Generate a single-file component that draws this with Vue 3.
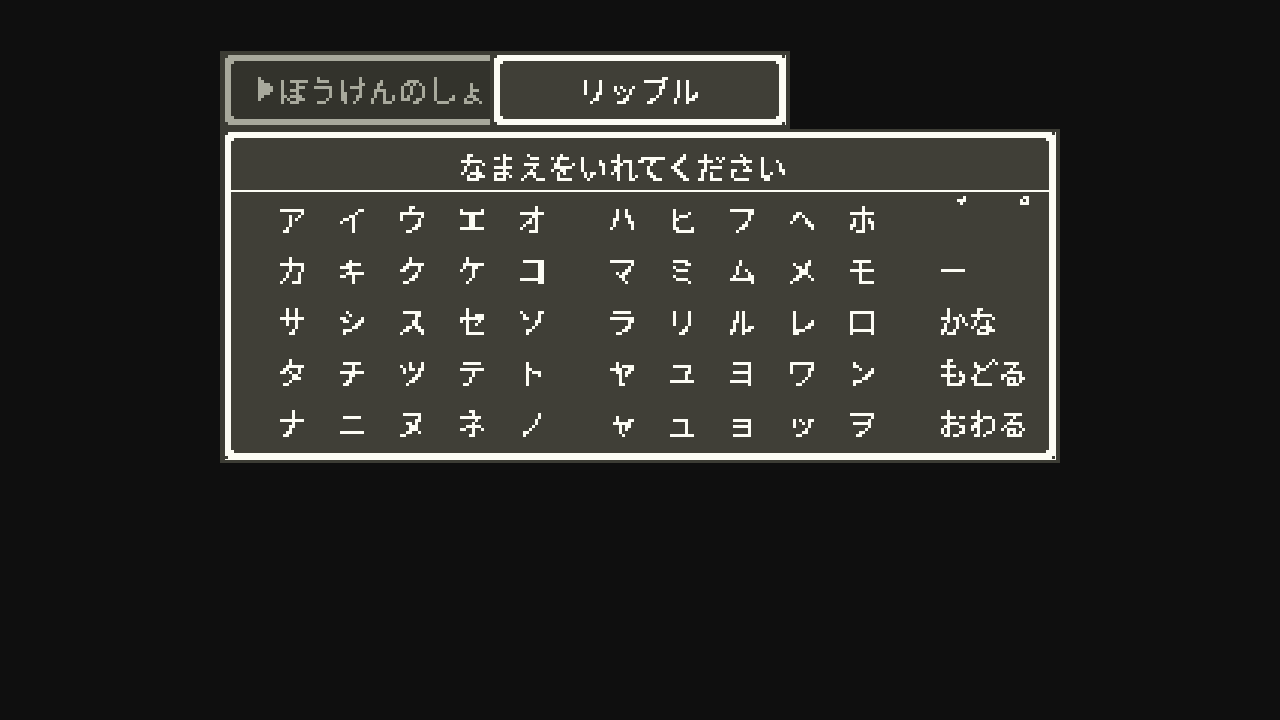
<template>
  <div class="screen">
    <svg class="filters" width="0" height="0" aria-hidden="true">
      <filter id="pixelate" x="0" y="0" width="100%" height="100%" color-interpolation-filters="sRGB">
        <feFlood x="1" y="1" width="1" height="1" />
        <feComposite width="3" height="3" />
        <feTile result="grid" />
        <feComposite in="SourceGraphic" in2="grid" operator="in" />
        <feComponentTransfer>
          <feFuncA type="discrete" tableValues="0 1" />
        </feComponentTransfer>
        <feMorphology operator="dilate" radius="1" />
      </filter>
    </svg>

    <div class="tabs">
      <div class="tab tab-book">
        <span class="corner tl"></span>
        <span class="corner bl"></span>
        <span class="cursor pixel-text"></span>
        <span class="pixel-text tab-label">ぼうけんのしょ</span>
      </div>
      <div class="tab tab-name">
        <span v-for="c in corners" :key="c" class="corner" :class="c"></span>
        <span class="pixel-text tab-label hero-name">リップル</span>
      </div>
    </div>

    <div class="panel">
      <div class="frame">
        <span v-for="c in corners" :key="c" class="corner" :class="c"></span>
        <div class="title">
          <span class="pixel-text">なまえをいれてください</span>
        </div>
        <div class="keys">
          <div v-for="(group, i) in kanaGroups" :key="i" class="kana-group">
            <span v-for="k in group" :key="k" class="key pixel-text">{{ k }}</span>
          </div>
          <div class="side">
            <div class="marks">
              <span class="mark dakuten pixel-text">゛</span>
              <span class="mark handakuten pixel-text">゜</span>
            </div>
            <span class="side-key pixel-text">ー</span>
            <span class="side-key pixel-text">かな</span>
            <span class="side-key pixel-text">もどる</span>
            <span class="side-key pixel-text">おわる</span>
          </div>
        </div>
      </div>
    </div>
  </div>
</template>

<script setup>
const corners = ['tl', 'tr', 'bl', 'br']

const kanaGroups = [
  'アイウエオカキクケコサシスセソタチツテトナニヌネノ'.split(''),
  'ハヒフヘホマミムメモラリルレロヤユヨワンャュョッヲ'.split('')
]
</script>

<style>
html,
body {
  margin: 0;
  background: #0f0f0f;
}
</style>

<style scoped>
.screen {
  width: 1280px;
  height: 720px;
  box-sizing: border-box;
  padding: 51px 0 0 220px;
  background: #0f0f0f;
  color: #fcfcf4;
  font-family: "Noto Sans CJK JP", "Noto Sans", sans-serif;
  font-size: 30px;
  font-weight: 400;
  line-height: 36px;
  -webkit-text-stroke: 0.5px currentColor;
  overflow: hidden;
}

.filters {
  position: absolute;
}

.pixel-text {
  display: block;
  filter: url(#pixelate);
  white-space: nowrap;
}

.tabs {
  display: flex;
  gap: 4px;
  width: 570px;
  height: 78px;
  box-sizing: border-box;
  padding: 4px 4px 4px 5px;
  background: #3c3c34;
}

.tab {
  position: relative;
  display: flex;
  align-items: center;
  box-sizing: border-box;
  height: 70px;
}

.tab-book {
  width: 265px;
  padding-left: 27px;
  gap: 2px;
  border: 6px solid #a8a99c;
  border-right: 0;
  background: #33332c;
  color: #a8a99c;
}

.tab-name {
  justify-content: center;
  width: 292px;
  border: 6px solid #fcfcf4;
  border-right-width: 7px;
  background: #403f37;
}

.tab-label {
  margin-bottom: 3px;
}

.hero-name {
  letter-spacing: 1px;
}

.cursor {
  width: 0;
  height: 0;
  margin-bottom: 2px;
  border-style: solid;
  border-width: 12px 0 12px 18px;
  border-color: transparent transparent transparent #a8a99c;
}

.panel {
  width: 840px;
  height: 334px;
  box-sizing: border-box;
  padding: 3px 4px 3px 5px;
  background: #3c3c34;
}

.frame {
  position: relative;
  height: 328px;
  box-sizing: border-box;
  border: 6px solid #fcfcf4;
  border-right-width: 7px;
  border-bottom-width: 7px;
  background: #403f37;
}

.corner {
  position: absolute;
  width: 3px;
  height: 3px;
  background: #3c3c34;
}

.corner.tl {
  top: -6px;
  left: -6px;
  box-shadow: 6px 6px 0 #fcfcf4;
}

.corner.tr {
  top: -6px;
  right: -6px;
  box-shadow: -6px 6px 0 #fcfcf4;
}

.corner.bl {
  bottom: -6px;
  left: -6px;
  box-shadow: 6px -6px 0 #fcfcf4;
}

.corner.br {
  right: -6px;
  bottom: -6px;
  box-shadow: -6px -6px 0 #fcfcf4;
}

.tab-book .corner.tl {
  box-shadow: 6px 6px 0 #a8a99c;
}

.tab-book .corner.bl {
  box-shadow: 6px -6px 0 #a8a99c;
}

.title {
  height: 54px;
  box-sizing: border-box;
  padding: 10px 0 0 227px;
  border-bottom: 2px solid #fcfcf4;
}

.keys {
  display: flex;
  gap: 30px;
  padding: 2px 0 0 31px;
}

.kana-group {
  display: grid;
  grid-template-columns: repeat(5, 60px);
  grid-auto-rows: 51px;
  align-items: center;
  justify-items: center;
}

.key,
.side-key {
  height: 36px;
  margin-bottom: 4px;
}

.side {
  display: grid;
  grid-auto-rows: 51px;
  align-items: center;
  margin-left: 16px;
}

.marks {
  display: flex;
  align-self: start;
  height: 51px;
}

.mark {
  width: 60px;
  height: 36px;
  margin-top: -1px;
  font-size: 36px;
}

.dakuten {
  margin-left: 19px;
  width: 41px;
}

.handakuten {
  margin-left: 22px;
  width: 37px;
}
</style>
